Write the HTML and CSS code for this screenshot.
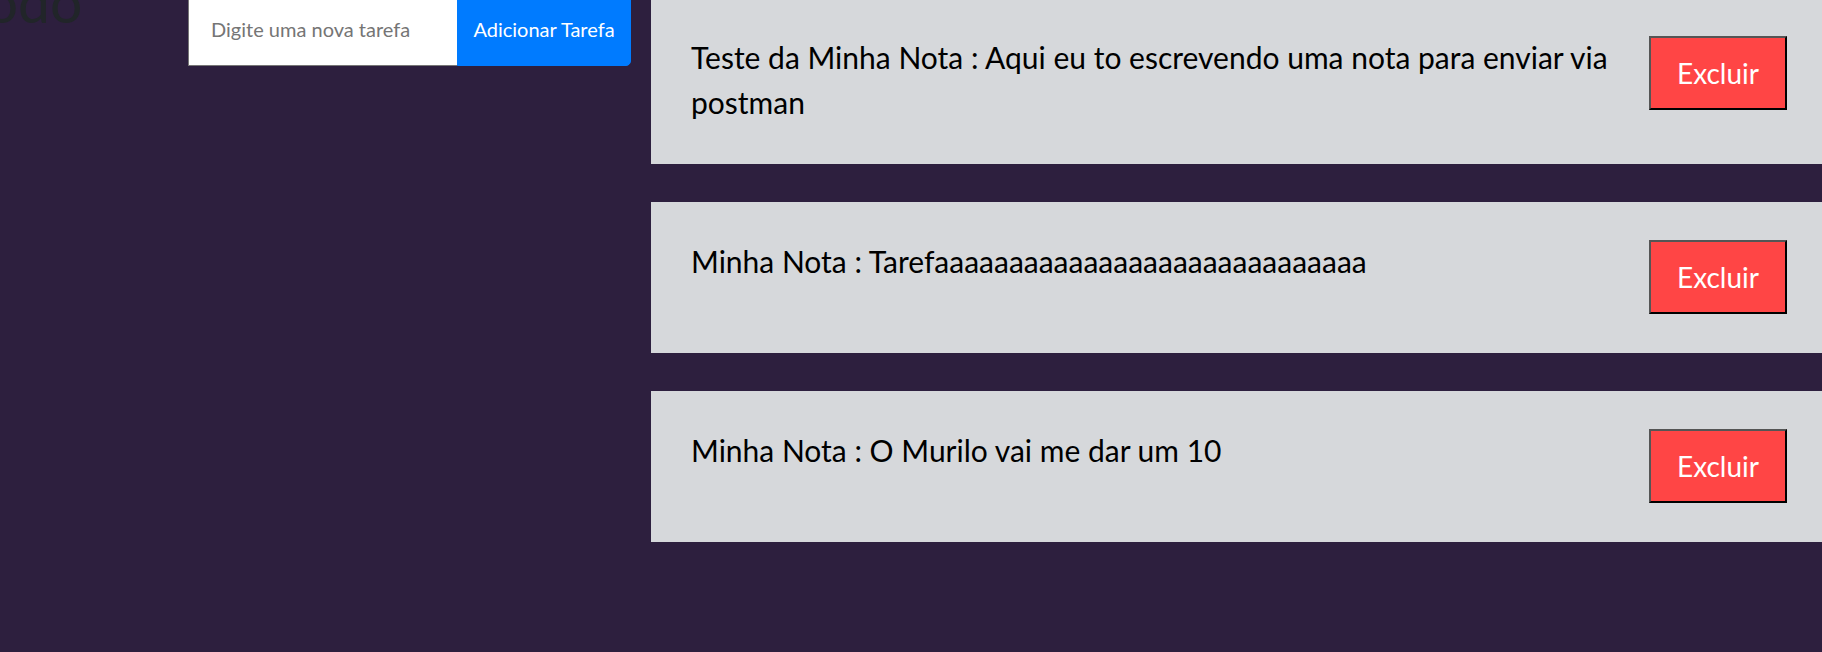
FILE: index.html
```html
<!DOCTYPE html>
<html lang="pt-BR">
<head>
<meta charset="utf-8">
<title>Todo</title>
<link rel="stylesheet" href="styles.css">
</head>
<body>
<div class="app">
  <aside class="side">
    <h1 class="title">Todo</h1>
    <form class="add-form">
      <input class="add-input" type="text" placeholder="Digite uma nova tarefa">
      <button class="add-btn" type="button">Adicionar Tarefa</button>
    </form>
  </aside>
  <main class="notes">
    <div class="note">
      <p class="note-text">Teste da Minha Nota : Aqui eu to escrevendo uma nota para enviar via postman</p>
      <button class="del-btn" type="button">Excluir</button>
    </div>
    <div class="note">
      <p class="note-text">Minha Nota : Tarefaaaaaaaaaaaaaaaaaaaaaaaaaaaaa</p>
      <button class="del-btn" type="button">Excluir</button>
    </div>
    <div class="note">
      <p class="note-text">Minha Nota : O Murilo vai me dar um 10</p>
      <button class="del-btn" type="button">Excluir</button>
    </div>
  </main>
</div>
</body>
</html>
```

FILE: styles.css
```css
* {
  box-sizing: border-box;
}

html,
body {
  margin: 0;
  height: 100%;
}

body {
  background: #2d1f3e;
  font-family: Lato, "Open Sans", sans-serif;
  overflow: hidden;
}

.app {
  display: flex;
  align-items: flex-start;
}

.side {
  flex: none;
  width: 651px;
  display: flex;
  align-items: flex-start;
}

.title {
  flex: none;
  width: 231px;
  margin: -27px 0 0 -41px;
  font-size: 57px;
  line-height: 56px;
  font-weight: 400;
  color: #212529;
  white-space: nowrap;
}

.add-form {
  display: flex;
  height: 74px;
  margin: -8px 0 0 -2px;
}

.add-input {
  width: 269px;
  height: 100%;
  padding: 0 22px;
  border: 1px solid #767676;
  border-top: none;
  border-right: none;
  border-radius: 0;
  background: #fff;
  font-family: Lato, "Open Sans", sans-serif;
  font-size: 20px;
  color: #495057;
  outline: none;
}

.add-input::placeholder {
  color: #757575;
}

.add-btn {
  width: 174px;
  height: 100%;
  border: 1px solid #007bff;
  border-radius: 0 5px 5px 0;
  background: #007bff;
  color: #fff;
  font-family: Lato, "Open Sans", sans-serif;
  font-size: 20px;
}

.notes {
  flex: 1;
  display: flex;
  flex-direction: column;
  gap: 38px;
  margin-top: -2px;
}

.note {
  display: flex;
  justify-content: space-between;
  align-items: flex-start;
  gap: 16px;
  padding: 38px 35px 39px 40px;
  background: #d6d8db;
}

.note-text {
  margin: -1px 0 0;
  font-size: 30px;
  line-height: 45px;
  color: #000;
}

.del-btn {
  flex: none;
  width: 138px;
  height: 74px;
  padding: 0;
  border: 2px solid;
  border-color: #555 #000 #000 #555;
  background: #ff4545;
  color: #fff;
  font-family: Lato, "Open Sans", sans-serif;
  font-size: 28px;
}
```
